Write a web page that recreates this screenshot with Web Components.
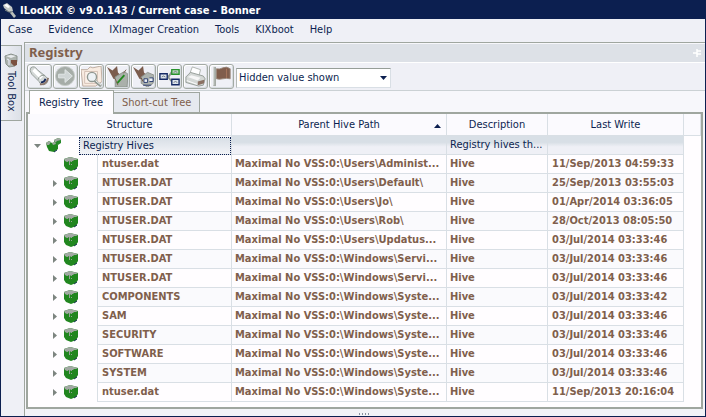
<!DOCTYPE html>
<html lang="en">
<head>
<meta charset="utf-8">
<title>ILooKIX</title>
<style>
html, body { height: 100%; }
body {
  margin: 0;
  --navy: #0c1f50; --brown: #805f4c; --line: #d9dfe5; --edge: #9fa69f; --face: #eff0f6;
  font: 11px/16px "DejaVu Sans Condensed", "DejaVu Sans", sans-serif;
  color: var(--navy);
}
</style>
</head>
<body>
<app-window heading="ILooKIX © v9.0.143 / Current case - Bonner">
  <menu-bar slot="menu" items="Case|Evidence|IXImager Creation|Tools|KIXboot|Help"></menu-bar>
  <side-dock slot="side">Tool Box</side-dock>
  <tool-panel heading="Registry">
    <tool-bar slot="tools"></tool-bar>
    <tab-strip slot="tabs" items="Registry Tree|Short-cut Tree"></tab-strip>
    <registry-table></registry-table>
  </tool-panel>
</app-window>
<script>
function define(name, html, setup) {
  customElements.define(name, class extends HTMLElement {
    constructor() {
      super();
      this.attachShadow({ mode: "open" }).innerHTML = html;
    }
    connectedCallback() {
      if (setup && !this.ready) { this.ready = true; setup(this, this.shadowRoot); }
    }
  });
}
const base = `*{box-sizing:border-box} button{font:inherit;color:inherit;background:none;border:0;padding:0;margin:0}`;

define("app-window", `<style>${base}
:host{display:flex;flex-direction:column;box-sizing:border-box;min-height:100vh;background:var(--face);border:solid var(--navy);border-width:0 1px 1px}
header{height:19px;flex:none;background:var(--navy);color:#fff;display:flex;align-items:center;gap:3px;padding:2px 1px 0}
h1{margin:0;font-size:11px;line-height:16px;font-weight:bold;white-space:nowrap}
.body{flex:1;display:flex;min-height:0}
.main{flex:1;min-width:0;display:flex}
svg{display:block}
</style>
<header><svg width="15" height="16" viewBox="0 0 15 16" aria-hidden="true"><path d="M1 2l4-2 5 4 1 4-4 1-5-4z" fill="#c4c9c6"/><path d="M2 2l3-1 3 3-2 1z" fill="#fff"/><path d="M10 8l4 5-2 2-4-5z" fill="#b9beb9"/><path d="M3 7l4 2 3 0" stroke="#838d88" fill="none"/></svg><h1></h1></header>
<slot name="menu"></slot>
<div class="body"><slot name="side"></slot><div class="main"><slot></slot></div></div>`,
(el, r) => r.querySelector("h1").textContent = el.getAttribute("heading"));

define("menu-bar", `<style>${base}
:host{display:block;height:23px}
nav{display:flex;gap:16px;padding:3px 7px 0}
button{line-height:16px;white-space:nowrap}
</style><nav></nav>`, (el, r) => {
  for (const t of el.getAttribute("items").split("|")) {
    const b = document.createElement("button");
    b.textContent = t;
    r.querySelector("nav").append(b);
  }
});

define("side-dock", `<style>${base}
:host{display:block;flex:none;width:23px;padding-top:3px}
button{width:21px;height:76px;border:1px solid var(--edge);border-left:0;display:flex;flex-direction:column;align-items:center;gap:3px;padding-top:7px;background:linear-gradient(90deg,var(--face),#dce0e7)}
span{writing-mode:vertical-rl;white-space:nowrap;line-height:16px}
svg{display:block;flex:none}
</style><button><svg width="15" height="15" viewBox="0 0 15 15" aria-hidden="true"><path d="M1 3l6-2 6 2v5l-2 5-6 1-3-3z" fill="#adb3ae" stroke="#8b938e"/><path d="M2 3l5-1 5 1-5 2z" fill="#e9ecee"/><path d="M7 7h6v5l-3 1-3-3z" fill="#7b5140"/><path d="M3 6l2 1v5" stroke="#eef" fill="none"/></svg><span><slot></slot></span></button>`);

define("tool-panel", `<style>${base}
:host{flex:1;min-width:0;display:flex;flex-direction:column;border:1px solid var(--edge);border-width:1px 0 0 1px;background:#f7f7fb}
h2{margin:1px 0 0;height:19px;padding:0 4px 0;font-family:"Noto Sans",sans-serif;font-size:13px;line-height:17px;color:var(--brown);background:#dde1e7;border-bottom:1px solid #fff;display:flex;justify-content:space-between}
svg{display:block;margin:5px 0 0}
.box{flex:1;margin:0 2px 0 1px;border:2px solid var(--edge);background:#fffdff}
footer{height:7px;display:flex;justify-content:center;align-items:flex-end;background:#f2f3f7}
footer svg{margin:0}
</style><h2><span></span><svg width="8" height="8" viewBox="0 0 8 8" aria-hidden="true"><path d="M8 2H4M8 5H4M4 0v8M4 4H0" stroke="#fff" stroke-width="1.5" fill="none"/></svg></h2>
<slot name="tools"></slot><slot name="tabs"></slot>
<div class="box"><slot></slot></div>
<footer><svg width="12" height="3" viewBox="0 0 12 3" aria-hidden="true"><path d="M0 1h12" stroke="#8992a0" stroke-width="2" stroke-dasharray="1 2"/></svg></footer>`,
(el, r) => r.querySelector("h2 span").textContent = el.getAttribute("heading"));

const tools = [
 ["Flashlight", `<path d="M2 2q4-3 7 2l10 8q4 4-1 8-5 2-7-3L3 9Q0 5 2 2z" fill="#d3d7d6" stroke="#929b95"/><path d="M5 4l9 9" stroke="#fff" stroke-width="4"/><path d="M10 15q1-5 7-5" stroke="#8a938d" fill="none"/><path d="M12 20q7 1 9-7" stroke="#8c746a" stroke-width="2" fill="none"/><path d="M13 18q4 0 5-4" stroke="#17295b" stroke-width="2" fill="none"/>`],
 ["Go", `<circle cx="11" cy="11" r="10.500" fill="#a6ada8" stroke="#c8ceca"/><path d="M4 9h7V4l8 7-8 7v-5H4z" fill="#cfd5d5" stroke="#e5eaea"/>`],
 ["Find in folder", `<path d="M0 4h7l3-3 3 1 9-2 1 17-7 5H2z" fill="#f8ebe1" stroke="#baa99c"/><path d="M4 6h14v13H4z" fill="#fbf1e9" stroke="#d1bdb1"/><circle cx="12" cy="12" r="5" fill="#edf2f5" stroke="#8f9791" stroke-width="1.500"/><path d="M15 16l7 6" stroke="#8f9791" stroke-width="3"/><path d="M16 16l6 5" stroke="#fff"/>`],
 ["Mark", `<path d="M0 1l6 4 5-5 1 7 3 3-2 6-6-2z" fill="#7b5c4d"/><path d="M9 12l10-6 4 3-1 14H9z" fill="#aab0aa" stroke="#8c938d"/><path d="M11 19l8-9" stroke="#22891f" stroke-width="2"/><path d="M9 14l3 7M18 8l3-4" stroke="#7b5c4d" fill="none"/>`],
 ["Search marks", `<path d="M0 1l6 4 5-5 1 7 3 3-2 6-6-2z" fill="#7b5c4d"/><path d="M9 12l7-5 7 3-1 9-6 4-7-4z" fill="#adb3ae" stroke="#8c8f89"/><path d="M12 14h4v4h-4zM18 13h4v4h-4M11 21h9" fill="#edf1f4" stroke="#24376c"/><path d="M9 13l2 4" stroke="#6c4e3e"/>`],
 ["Diagram", `<path d="M9 11h2l4-6M10 12l4 5" stroke="#8c958f" stroke-width="2" fill="none"/><path d="M1 8.500h8v6H1z" fill="#dee5ed" stroke="#152a65" stroke-width="1.500"/><path d="M14 4h8v5h-8z" fill="#bcd9bf" stroke="#28922c" stroke-width="1.500"/><path d="M14 14.500h8v6h-8z" fill="#dee5ed" stroke="#152a65" stroke-width="1.500"/><path d="M3 12l2-1 2 1M16 7l2-1 2 1M16 18l2-1 2 1" stroke="#6d7780" fill="none"/>`],
 ["Print", `<path d="M5 9l3-8 9 3-2 8z" fill="#fff" stroke="#aab1ac"/><path d="M1 12l5-5 14 4 2 3-2 7-5 1-14-4z" fill="#d4d8d6" stroke="#929a94"/><path d="M3 12l4-2 10 3-3 3z" fill="#f7f7f7"/><path d="M14 17l7-2v4l-7 2z" fill="#8b7164"/><path d="M2 16l11 4" stroke="#fff"/>`],
 ["Flag", `<path d="M4 1v21" stroke="#a5aba5" stroke-width="3"/><path d="M6 3q3 1 7-1t8 1v11q-4-1-8 0t-7 0z" fill="#805d4c" stroke="#98877a"/><path d="M17 3v10" stroke="#a8775f"/><path d="M3 1v20" stroke="#dce0de"/>`]
];
define("tool-bar", `<style>${base}
:host{display:flex;align-items:center;gap:1px;height:27px;padding:0 2px;background:var(--face);border-bottom:1px solid #cbd1d4}
button{width:25px;height:25px;flex:none;border:1px solid #a3aaa4;border-radius:3px;box-shadow:inset 1px 1px #fff,inset -1px -1px #d7dce0;display:grid;place-items:center}
svg{display:block;width:21px;height:21px}
label{position:relative;display:flex;margin:2px 0 0 1px;width:155px}
select{appearance:none;width:100%;height:20px;font:inherit;color:var(--navy);background:#fff;border:1px solid var(--line);border-top-color:#969e98;border-left-color:#b4bab7;border-radius:0;padding:0 16px 0 2px;margin:0;line-height:16px}
label svg{position:absolute;right:4px;top:8px;width:7px;height:4px;pointer-events:none}
</style>`, (el, r) => {
  r.innerHTML += tools.map(([n, p]) => `<button aria-label="${n}"><svg viewBox="0 0 23 23" aria-hidden="true">${p}</svg></button>`).join("") +
  `<label><select aria-label="Value filter"><option>Hidden value shown</option></select><svg viewBox="0 0 7 4" aria-hidden="true"><path d="M0 0h7L3.500 4z" fill="#0c1f50"/></svg></label>`;
});

define("tab-strip", `<style>${base}
:host{display:flex;align-items:flex-end;height:21px;padding-left:4px;background:#f7f7fb}
button{height:20px;padding:0 8px;border:1px solid var(--edge);border-bottom:0;border-left:0;color:var(--brown);background:#e6e9ef;white-space:nowrap}
button[aria-selected=true]{height:24px;margin-bottom:-2px;padding:0 10px 0 9px;border-left:1px solid var(--edge);color:var(--navy);background:#fffdff;position:relative}
</style>`, (el, r) => {
  r.host.setAttribute("role", "tablist");
  el.getAttribute("items").split("|").forEach((t, i) => {
    const b = document.createElement("button");
    b.setAttribute("role", "tab");
    b.setAttribute("aria-selected", i === 0);
    b.textContent = t;
    r.append(b);
  });
});

const cube = `<path d="M0 2l6-2 8 2v7l-2 3-5 2-5-2-2-3z" fill="#21861f"/><path d="M0 2l6-2 8 2-2 1-2 0-1 1-2 0-1 1-2-1-1 1-2-1z" fill="#a2a9a3"/><path d="M5.500 4v4M7.500 4v1M7.500 7v1M3.500 4v1" stroke="#98a398"/><path d="M10 13l3-2" stroke="#173253"/>`;
define("hive-icon", `<style>:host{display:block;flex:none}svg{display:block}</style><svg width="15" height="15" viewBox="0 0 15 15" aria-hidden="true">${cube}</svg>`);
define("hive-group-icon", `<style>:host{display:block;flex:none}svg{display:block}</style><svg width="15" height="15" viewBox="0 0 15 15" aria-hidden="true"><path d="M8 2l4-2 3 1v4l-3 2-4-1z" fill="#26892a"/><path d="M8 2l4-2 3 1v1l-4 1-2 2z" fill="#a2a9a3"/><path d="M0 5l3-2 3 2 3-1 3 3v4l-4 3-5-1-2-4z" fill="#21861f"/><path d="M0 5l3-2 2 1-2 3-2 0zM6 5l3-1 1 2-3 1z" fill="#9da79d"/><path d="M8 14l3-2" stroke="#173253" fill="none"/></svg>`);

const rows = [
 ["ntuser.dat", "Users\\Administ...", "11/Sep/2013 04:59:33"],
 ["NTUSER.DAT", "Users\\Default\\", "25/Sep/2013 03:55:03"],
 ["NTUSER.DAT", "Users\\Jo\\", "01/Apr/2014 03:36:05"],
 ["NTUSER.DAT", "Users\\Rob\\", "28/Oct/2013 08:05:50"],
 ["NTUSER.DAT", "Users\\Updatus...", "03/Jul/2014 03:33:46"],
 ["NTUSER.DAT", "Windows\\Servi...", "03/Jul/2014 03:33:46"],
 ["NTUSER.DAT", "Windows\\Servi...", "03/Jul/2014 03:33:46"],
 ["COMPONENTS", "Windows\\Syste...", "03/Jul/2014 03:33:42"],
 ["SAM", "Windows\\Syste...", "03/Jul/2014 03:33:46"],
 ["SECURITY", "Windows\\Syste...", "03/Jul/2014 03:33:46"],
 ["SOFTWARE", "Windows\\Syste...", "03/Jul/2014 03:33:46"],
 ["SYSTEM", "Windows\\Syste...", "03/Jul/2014 03:33:46"],
 ["ntuser.dat", "Windows\\Syste...", "11/Sep/2013 20:16:04"]
];
define("registry-table", `<style>${base}
:host{display:block}
table{width:100%;table-layout:fixed;border-collapse:separate;border-spacing:0}
.c1{width:204px}.c3{width:101px}.c4{width:136px}.c5{width:17px}
th{height:22px;padding:0;font-weight:normal;border:solid var(--line);border-width:0 1px 1px 0;background:#fbfafe}
th button{width:100%;display:flex;justify-content:center;position:relative;line-height:16px}
th svg{position:absolute;right:5px;top:7px}
td{height:19px;padding:0 0 0 3px;white-space:nowrap;overflow:hidden;line-height:16px;border:solid var(--line);border-width:0 1px 1px 0}
td:nth-child(4){padding-left:4px}
tr>td:first-child{padding:0;border-bottom:0}
tbody td:last-child{border:0}
.tree{display:flex;align-items:center;height:19px}
.tree button,.pad{width:18px;height:14px;flex:none;display:grid;place-items:center}
.hive .tree{padding-left:18px}
hive-icon,hive-group-icon{margin-right:18px}
.name{flex:1;height:19px;padding:1px 0 0 4px;border:solid var(--line);border-width:0 0 1px 1px}
.root .name{height:18px;padding:0 0 0 3px;border:1px dotted var(--navy);background:linear-gradient(#d8dfe6,#f2f3f7)}
.root td:not(:first-child):not(:last-child){background:linear-gradient(#d8dfe6 35%,#eff0f6 60%)}
.hive{color:var(--brown);font-weight:bold}
.hive:nth-child(odd) td:not(:first-child):not(:last-child),.hive:nth-child(odd) .name{background:#fafafd}
</style>
<table><colgroup><col class="c1"><col><col class="c3"><col class="c4"><col class="c5"></colgroup>
<thead><tr><th><button>Structure</button></th><th aria-sort="ascending"><button>Parent Hive Path<svg width="7" height="4" viewBox="0 0 7 4" aria-hidden="true"><path d="M0 4h7L3.500 0z" fill="#0c1f50"/></svg></button></th><th><button>Description</button></th><th><button>Last Write</button></th><th></th></tr></thead>
<tbody><tr class="root"><td><div class="tree"><button aria-label="Collapse"><svg width="7" height="4" viewBox="0 0 7 4" aria-hidden="true"><path d="M0 0h7L3.500 4z" fill="#7d8580"/></svg></button><hive-group-icon></hive-group-icon><span class="name">Registry Hives</span></div></td><td></td><td>Registry hives th...</td><td></td><td></td></tr></tbody></table>`,
(el, r) => {
  r.querySelector("tbody").insertAdjacentHTML("beforeend", rows.map(([n, p, d], i) => `<tr class="hive"><td><div class="tree">${i ? '<button aria-label="Expand"><svg width="4" height="7" viewBox="0 0 4 7" aria-hidden="true"><path d="M0 0v7L4 3.500z" fill="#7d8580"/></svg></button>' : '<span class="pad"></span>'}<hive-icon></hive-icon><span class="name">${n}</span></div></td><td>Maximal No VSS:0:\\${p}</td><td>Hive</td><td>${d}</td><td></td></tr>`).join(""));
});
</script>
</body>
</html>
